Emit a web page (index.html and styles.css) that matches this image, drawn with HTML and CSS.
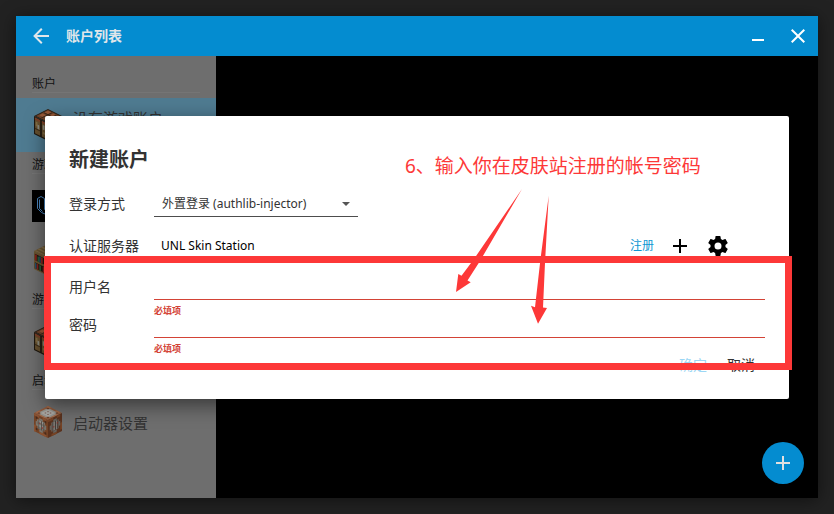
FILE: index.html
```html
<!DOCTYPE html>
<html lang="zh-CN">
<head>
<meta charset="utf-8">
<meta name="viewport" content="width=device-width, initial-scale=1">
<title>账户列表</title>
<link rel="stylesheet" href="styles.css">
</head>
<body>
<svg class="defs" width="0" height="0" aria-hidden="true">
  <defs>
    <symbol id="crafting" viewBox="0 0 32 32">
      <g transform="matrix(1.75 .875 -1.75 .875 16 0)">
        <path fill="#2e2015" d="M0 0h8v8H0z"/><path fill="#70442b" d="M.6.6h6.800v6.800H.6z"/>
        <path fill="#9a5a38" d="M1 1h2v2H1zM4 1h2v2H4zM1 4h2v2H1zM4 4h2v2H4zM6 6h1v1H6z"/>
        <path fill="#38271a" d="M3 1h.5v6H3zM1 3h6v.5H1zM5.500 1H6v6h-.5z"/>
      </g>
      <g transform="matrix(1.75 .875 0 2.25 2 7)">
        <path fill="#20180f" d="M0 0h8v8H0z"/><path fill="#66502e" d="M.6 1h2.900v6.400H.6zM4.500 1h3v6.400h-3z"/>
        <path fill="#7b3f27" d="M.5.4h3v1h-3zM4.500.4h3v1h-3z"/><path fill="#806b43" d="M1 2h1v2H1zM5 5h2v1H5z"/>
        <path fill="#8b8b80" d="M2 3h1v2H2zM5 2h1v2H5z"/><path fill="#3a2b19" d="M.6 5h3v.5h-3z"/>
      </g>
      <g transform="matrix(1.75 -.875 0 2.25 16 14)">
        <path fill="#1a130c" d="M0 0h8v8H0z"/><path fill="#4f3c22" d="M.6 1h2.900v6.400H.6zM4.500 1h3v6.400h-3z"/>
        <path fill="#777" d="M2 2h1v2H2zM5 3h2v1H5z"/>
      </g>
    </symbol>
    <symbol id="shelf" viewBox="0 0 32 32">
      <g transform="matrix(1.75 .875 -1.75 .875 16 0)">
        <path fill="#665334" d="M0 0h8v8H0z"/><path fill="#806b43" d="M0 1h8v1H0zM0 3h8v1H0zM0 5h8v1H0zM0 7h8v.6H0z"/>
      </g>
      <g transform="matrix(1.75 .875 0 2.25 2 7)">
        <path fill="#6b5430" d="M0 0h8v8H0z"/><path fill="#1c160e" d="M.5 1h7v2.800h-7zM.5 4.800h7v2.600h-7z"/>
        <path fill="#8a211b" d="M.6 1.200h1v2.600h-1zM4 1.200h1v2.600H4zM1.500 5h1v2.400h-1zM5 5h1v2.400H5z"/>
        <path fill="#285b35" d="M2 1.500h1v2.300H2zM6 1.200h1v2.600H6zM3 5h1v2.400H3z"/>
        <path fill="#27516d" d="M3 1.200h.8v2.600H3zM.6 5h.8v2.400H.6zM6.400 5h.8v2.400h-.8z"/>
      </g>
      <g transform="matrix(1.75 -.875 0 2.25 16 14)"><path fill="#3c2e1b" d="M0 0h8v8H0z"/></g>
    </symbol>
    <symbol id="command" viewBox="0 0 32 32">
      <g transform="matrix(1.75 .875 -1.75 .875 16 0)">
        <path fill="#915b3d" d="M0 0h8v8H0z"/><path fill="#a36a49" d="M0 0h2v1H0zM5 0h2v1H5zM0 5h1v2H0zM7 2h1v3H7zM3 7h3v1H3z"/>
        <path fill="#6a3e29" d="M1 1h1v1H1zM6 1h1v1H6zM1 6h1v1H1zM6 6h1v1H6z"/>
        <path fill="#969590" d="M2 1h4v1h1v4H6v1H2V6H1V2h1z"/><path fill="#aaa9a4" d="M2 2h4v4H2z"/>
        <path fill="#744941" d="M3 3h.6v.6H3zM4.500 3h.6v.6h-.6zM3 4.500h.6v.6H3zM4.500 4.500h.6v.6h-.6z"/>
      </g>
      <g transform="matrix(1.75 .875 0 2.25 2 7)">
        <path fill="#744326" d="M0 0h8v8H0z"/><path fill="#8a5231" d="M0 0h3v1H0zM5 0h2v1H5zM0 5h1v3H0zM3 7h4v1H3z"/>
        <path fill="#482b1c" d="M1 1h1v1H1zM6 1h1v1H6zM1 6h1v1H1zM6 6h1v1H6z"/>
        <path fill="#77756e" d="M2 2h4v4H2z"/><path fill="#92918b" d="M2 2h4v1H2zM2 4h4v1H2z"/>
        <path fill="#77756e" d="M3 1h2v1H3zM3 6h2v1H3zM1 3h1v2H1zM6 3h1v2H6z"/>
        <path fill="#514b46" d="M2.500 2h.5v4h-.5zM4 2h.5v4H4zM5.300 2h.5v4h-.5z"/><path fill="#9c3027" d="M3 3h.6v.6H3zM4.500 4.500h.6v.6h-.6z"/>
      </g>
      <g transform="matrix(1.75 -.875 0 2.25 16 14)">
        <path fill="#5a321e" d="M0 0h8v8H0z"/><path fill="#764325" d="M0 0h3v1H0zM5 0h2v1H5zM7 4h1v3H7zM2 7h3v1H2z"/>
        <path fill="#7b7973" d="M2 2h4v4H2z"/><path fill="#64625d" d="M3 1h2v1H3zM3 6h2v1H3zM1 3h1v2H1zM6 3h1v2H6z"/>
        <path fill="#3c3532" d="M2.500 2h.5v4h-.5zM4 2h.5v4H4zM5.300 2h.5v4h-.5z"/><path fill="#8e2c25" d="M3 4h.6v.6H3zM5 3h.6v.6H5z"/>
      </g>
    </symbol>
    <symbol id="plus" viewBox="0 0 24 24"><path fill="currentColor" d="M11 5h2v6h6v2h-6v6h-2v-6H5v-2h6z"/></symbol>
  </defs>
</svg>
<div class="window">
  <header class="titlebar">
    <button class="icon-btn"><svg viewBox="0 0 24 24"><path fill="currentColor" d="M20 11v2H8l5.500 5.500-1.420 1.420L4.160 12l7.920-7.920L13.500 5.500 8 11z"/></svg></button>
    <h1>账户列表</h1>
    <div class="controls">
      <button class="icon-btn"><svg viewBox="0 0 24 24"><path fill="#fff" d="M6 15h12v2H6z"/></svg></button>
      <button class="icon-btn"><svg viewBox="0 0 24 24"><path fill="#fff" d="M19 6.410 17.590 5 12 10.590 6.410 5 5 6.410 10.590 12 5 17.590 6.410 19 12 13.410 17.590 19 19 17.590 13.410 12z"/></svg></button>
    </div>
  </header>
  <div class="content">
    <nav class="sidebar">
      <h2>账户</h2>
      <button class="item selected"><svg><use href="#crafting"/></svg><span>没有游戏账户</span></button>
      <h2>游戏</h2>
      <button class="item"><svg viewBox="0 0 32 32"><path d="M0 0h32v32H0z"/><path fill="none" stroke="#4a86c0" d="M5.500 8.500 9 6.500l3.500 2v11l4 3v3l-7-3-4-4zM7.500 9.500v9l3 3M12.500 10.500l5-2v12l4 2"/></svg></button>
      <button class="item"><svg><use href="#shelf"/></svg></button>
      <h2>游戏</h2>
      <button class="item"><svg><use href="#crafting"/></svg></button>
      <h2>启动</h2>
      <button class="item"><svg><use href="#command"/></svg><span>启动器设置</span></button>
    </nav>
    <main class="stage"><button class="fab"><svg><use href="#plus"/></svg></button></main>
  </div>
  <div class="overlay">
    <form class="dialog">
      <h2>新建账户</h2>
      <div class="row method">
        <label for="method">登录方式</label>
        <div class="select">
          <select id="method"><option>外置登录 (authlib-injector)</option></select>
          <svg viewBox="0 0 8 4"><path fill="#555" d="M0 0h8L4 4z"/></svg>
        </div>
      </div>
      <div class="row server">
        <span>认证服务器</span>
        <div class="server-field">
          <span class="server-name">UNL Skin Station</span>
          <a href="#">注册</a>
          <button type="button" class="icon-btn"><svg><use href="#plus"/></svg></button>
          <button type="button" class="icon-btn"><svg viewBox="0 0 24 24"><path fill="currentColor" d="M12 15.500A3.500 3.500 0 0 1 8.500 12 3.500 3.500 0 0 1 12 8.500a3.500 3.500 0 0 1 3.500 3.500 3.500 3.500 0 0 1-3.500 3.500m7.430-2.530c.04-.32.07-.64.07-.97s-.03-.66-.07-1l2.110-1.630c.19-.15.24-.42.12-.64l-2-3.460c-.12-.22-.39-.31-.61-.22l-2.490 1c-.52-.39-1.060-.73-1.690-.98l-.37-2.650A.506.506 0 0 0 14 2h-4c-.25 0-.46.18-.5.42l-.37 2.650c-.63.25-1.170.59-1.690.98l-2.490-1c-.22-.09-.49 0-.61.22l-2 3.460c-.13.22-.07.49.12.64L4.570 11c-.04.34-.07.67-.07 1s.03.65.07.97l-2.110 1.660c-.19.15-.25.42-.12.64l2 3.460c.12.22.39.3.61.22l2.490-1.010c.52.4 1.060.74 1.690.99l.37 2.650c.04.24.25.42.5.42h4c.25 0 .46-.18.5-.42l.37-2.650c.63-.26 1.170-.59 1.690-.99l2.490 1.010c.22.08.49 0 .61-.22l2-3.460c.12-.22.07-.49-.12-.64z"/></svg></button>
        </div>
      </div>
      <div class="row">
        <label for="user">用户名</label>
        <div><input id="user" type="text"><p class="error">必填项</p></div>
      </div>
      <div class="row">
        <label for="pass">密码</label>
        <div><input id="pass" type="password"><p class="error">必填项</p></div>
      </div>
      <footer><button type="submit" disabled>确定</button><button type="button">取消</button></footer>
      <div class="mark-box"></div>
      <p class="mark-text">6、输入你在皮肤站注册的帐号密码</p>
      <svg class="mark-arrows" viewBox="450 186 104 140"><path fill="#fd3838" d="M522 189 480 261 467.500 280.500 470.700 282.300 456 292 458.300 274 461.500 275.700 474 259zM548.700 195.700 545 263 543 307.500 547 308 538 323.700 531 305.700 535 307.300 540.500 259z"/></svg>
    </form>
  </div>
</div>
</body>
</html>
```

FILE: styles.css
```css
* { box-sizing: border-box; }
body {
  margin: 0;
  min-height: 100vh;
  padding: 16px;
  display: flex;
  background: #222;
  color: #333;
  font-family: "Noto Sans", "Noto Sans CJK SC", sans-serif;
  font-size: 14px;
}
h1, h2, p { margin: 0; }
button { padding: 0; border: 0; background: none; color: inherit; font: inherit; }
svg { display: block; }
.defs { position: absolute; }

.window {
  position: relative;
  flex: 1;
  display: flex;
  flex-direction: column;
  background: #000;
  box-shadow: 0 2px 16px rgba(0, 0, 0, .5);
}
.titlebar {
  display: flex;
  align-items: center;
  gap: 13px;
  height: 40px;
  padding: 0 8px 0 13px;
  background: #048cd0;
  color: #e0e6ea;
}
.titlebar h1 { font-size: 14px; line-height: 20px; font-weight: 700; }
.controls { display: flex; gap: 16px; margin-left: auto; }
.icon-btn, .icon-btn svg { width: 24px; height: 24px; }

.content { flex: 1; display: flex; }
.sidebar { width: 200px; padding-top: 15px; background: #6e6e6e; }
.sidebar h2 {
  height: 22px;
  margin: 0 16px 5px;
  border-bottom: 1px solid #757575;
  color: #111;
  font-size: 12px;
  line-height: 26px;
  font-weight: 400;
}
.item {
  display: flex;
  align-items: center;
  gap: 9px;
  width: 100%;
  height: 54px;
  padding: 0 16px;
  font-size: 15px;
}
.item svg { width: 32px; height: 32px; }
.selected { background: #4f7b91; }
.selected span { padding-bottom: 16px; }
.stage { flex: 1; display: flex; align-items: flex-end; justify-content: flex-end; padding: 14px; }
.fab {
  display: grid;
  place-items: center;
  width: 42px;
  height: 42px;
  border-radius: 50%;
  background: #048cd0;
  color: #e0e0e0;
}
.fab svg { width: 24px; height: 24px; }

.overlay {
  position: absolute;
  inset: 0;
  display: flex;
  align-items: center;
  padding: 0 29px;
}
.dialog {
  position: relative;
  flex: 1;
  padding: 24px;
  border-radius: 2px;
  background: #fff;
  box-shadow: 0 6px 20px rgba(0, 0, 0, .5);
}
.dialog h2 { margin-bottom: 8px; font-size: 20px; line-height: 40px; font-weight: 700; }
.row { display: grid; grid-template-columns: 85px 1fr; line-height: 18px; }
.method, .server { align-items: center; }
.method { height: 29px; margin-bottom: 15px; line-height: 22px; }
.method label { padding-top: 4px; }
.server { height: 28px; margin-bottom: 18px; }
.select { position: relative; width: 204px; }
.select select {
  display: block;
  width: 100%;
  height: 29px;
  padding: 4px 8px 0;
  border: 0;
  border-bottom: 1px solid #4d4d4d;
  border-radius: 0;
  appearance: none;
  background: none;
  color: #333;
  font: inherit;
  font-size: 12px;
}
.select svg { position: absolute; right: 8px; top: 14px; width: 8px; height: 4px; }
.server-field { display: flex; align-items: center; gap: 14px; padding: 0 35px 0 7px; color: #000; }
.server-name { flex: 1; font-size: 12px; }
.server-field a { color: #0e97d3; font-size: 12px; text-decoration: none; }
.row input {
  display: block;
  width: 100%;
  height: 22px;
  padding: 0;
  border: 0;
  border-bottom: 1px solid #d34336;
  outline: 0;
  background: none;
  font: inherit;
}
.error { padding-top: 6px; color: #d34336; font-size: 9px; line-height: 10px; font-weight: 700; }
.dialog footer { display: flex; justify-content: flex-end; gap: 20px; padding: 1px 10px 0 0; }
.dialog footer button { line-height: 20px; }
.dialog footer button:disabled { color: #9bd7f5; }

.mark-box { position: absolute; inset: 140px -3px 29px -1px; border: 7px solid #fd3838; }
.mark-text { position: absolute; left: 360px; top: 36px; color: #fd3838; font-size: 19px; line-height: 28px; white-space: nowrap; }
.mark-arrows { position: absolute; left: 405px; top: 70px; width: 104px; height: 140px; }
```
